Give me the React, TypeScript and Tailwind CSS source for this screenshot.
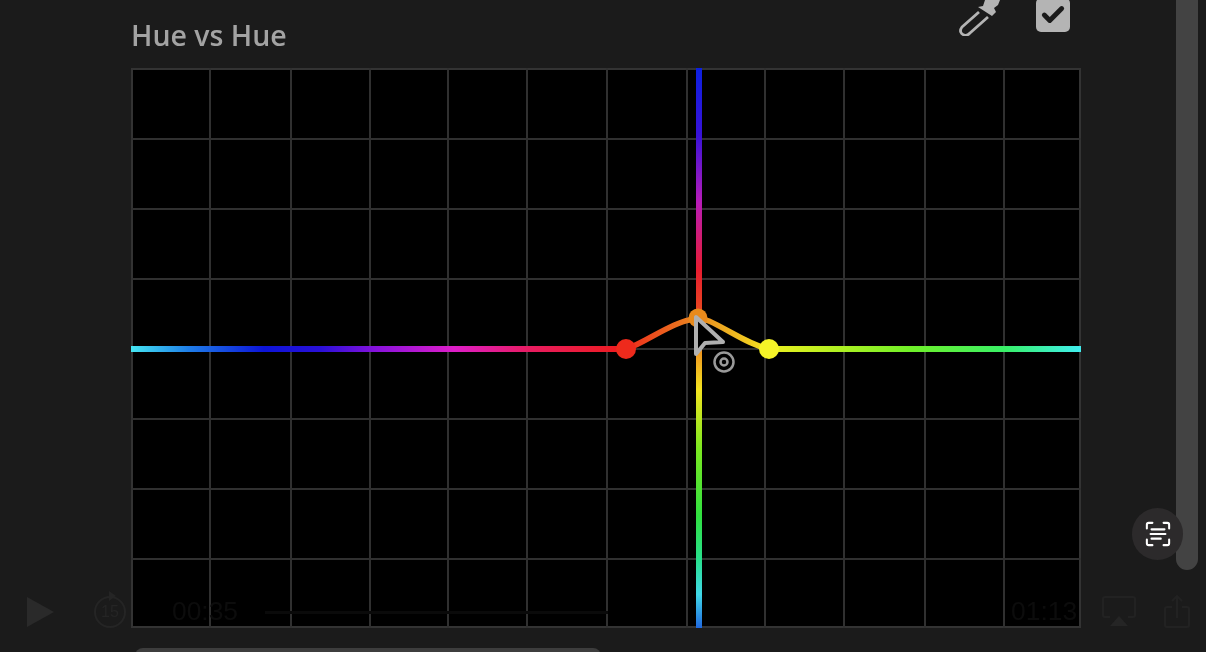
import { Check } from "lucide-react";

const vLines = [79, 160, 239, 317, 396, 476, 556, 634, 713, 794, 873];
const hLines = [71, 141, 211, 281, 351, 421, 491];

const HueChart = () => (
  <svg width="950" height="560" viewBox="0 0 950 560" className="block">
    <defs>
      <linearGradient id="hLine" x1="0" x2="950" y1="0" y2="0" gradientUnits="userSpaceOnUse">
        <stop offset="0" stopColor="#45e6f2" />
        <stop offset="0.06" stopColor="#1f7fe8" />
        <stop offset="0.14" stopColor="#0c14d8" />
        <stop offset="0.2" stopColor="#2a10d8" />
        <stop offset="0.26" stopColor="#8a12dc" />
        <stop offset="0.34" stopColor="#de1ec8" />
        <stop offset="0.42" stopColor="#e81c60" />
        <stop offset="0.52" stopColor="#ee1c1c" />
        <stop offset="0.67" stopColor="#f0f020" />
        <stop offset="0.72" stopColor="#c4f020" />
        <stop offset="0.82" stopColor="#70f028" />
        <stop offset="0.92" stopColor="#38f068" />
        <stop offset="1" stopColor="#40eef0" />
      </linearGradient>
      <linearGradient id="vLine" x1="0" x2="0" y1="0" y2="560" gradientUnits="userSpaceOnUse">
        <stop offset="0" stopColor="#0c20e0" />
        <stop offset="0.12" stopColor="#3812d8" />
        <stop offset="0.24" stopColor="#b81cb8" />
        <stop offset="0.36" stopColor="#e81c30" />
        <stop offset="0.45" stopColor="#e8501c" />
        <stop offset="0.51" stopColor="#f09a20" />
        <stop offset="0.575" stopColor="#f4e420" />
        <stop offset="0.68" stopColor="#7ce820" />
        <stop offset="0.8" stopColor="#30e040" />
        <stop offset="0.88" stopColor="#28e090" />
        <stop offset="0.94" stopColor="#40d8e8" />
        <stop offset="1" stopColor="#1f68e0" />
      </linearGradient>
      <linearGradient id="bump" x1="495" x2="638" y1="0" y2="0" gradientUnits="userSpaceOnUse">
        <stop offset="0" stopColor="#ee2a1c" />
        <stop offset="0.5" stopColor="#ea8a20" />
        <stop offset="1" stopColor="#f4e420" />
      </linearGradient>
    </defs>
    <rect x="1" y="1" width="948" height="558" fill="#000" stroke="#333333" strokeWidth="2" />
    {vLines.map((x) => (
      <line key={x} x1={x} x2={x} y1="0" y2="560" stroke="#303030" strokeWidth="2" />
    ))}
    {hLines.map((y) => (
      <line key={y} x1="0" x2="950" y1={y} y2={y} stroke="#303030" strokeWidth="2" />
    ))}
    {/* hue line, broken where the curve lifts off */}
    <rect x="0" y="278" width="495" height="6" fill="url(#hLine)" />
    <rect x="638" y="278" width="312" height="6" fill="url(#hLine)" />
    <rect x="565" y="0" width="6" height="250" fill="url(#vLine)" />
    <rect x="565" y="282" width="6" height="278" fill="url(#vLine)" />
    <path
      d="M495 281 C 512 276, 538 256, 558 252 Q 568 249, 578 253 C 598 262, 618 277, 638 281"
      fill="none"
      stroke="url(#bump)"
      strokeWidth="5.5"
    />
    <circle cx="567" cy="250" r="9.5" fill="#e88a1c" />
    <circle cx="495" cy="281" r="10" fill="#ee2a1c" />
    <circle cx="638" cy="281" r="10" fill="#f6f428" />
    <path d="M565 249 L565 286 L574 275 L592 274 Z" fill="#000" stroke="#b0b0b0" strokeWidth="4" strokeLinejoin="round" />
    <circle cx="593" cy="294" r="9.5" fill="none" stroke="#9a9a9a" strokeWidth="2.5" />
    <circle cx="593" cy="294" r="3.5" fill="none" stroke="#9a9a9a" strokeWidth="2.5" />
  </svg>
);

const Eyedropper = () => (
  <svg width="44" height="36" viewBox="0 0 44 36" fill="none">
    <path d="M22 12 L5 27 C2 31 4 34 7 35 C9 36 11 35 13 33 L31 17" stroke="#b4b4b4" strokeWidth="2.8" strokeLinejoin="round" />
    <path d="M21 7 L26 6 L28 0 L43 0 L41 5 L37 8 L39 12 L35 16 Z" fill="#b4b4b4" />
  </svg>
);

const PlayerBar = () => (
  <div className="absolute left-0 right-0 top-[590px] h-[44px] flex items-center font-['Liberation_Sans',sans-serif] text-[26.4px] text-[#0c0c0c]">
    <svg width="30" height="32" viewBox="0 0 30 32" className="ml-[26px]">
      <path d="M1 1 L28 16 L1 31 Z" fill="#2a2a2a" />
    </svg>
    <div className="relative ml-[38px] w-[32px] h-[32px] rounded-full border-2 border-[#252525] flex items-center justify-center text-[16px] text-[#252525]">
      15
      <svg width="12" height="12" viewBox="0 0 12 12" className="absolute -top-[8px] left-[11px]">
        <path d="M2 1 L9 6 L2 11 Z" fill="#252525" />
      </svg>
    </div>
    <span className="ml-[46px]">00:35</span>
    <div className="ml-[27px] w-[343px] h-[3px] bg-[#0a0a0a]" />
    <span className="ml-[403px]">01:13</span>
    <svg width="34" height="32" viewBox="0 0 34 32" fill="none" className="ml-[25px]">
      <path d="M8 21 H3 Q1 21 1 19 V3 Q1 1 3 1 H31 Q33 1 33 3 V19 Q33 21 31 21 H26" stroke="#222222" strokeWidth="2" />
      <path d="M17 20 L26 30 H8 Z" fill="#252525" />
    </svg>
    <svg width="26" height="34" viewBox="0 0 26 34" fill="none" className="ml-[28px]">
      <path d="M8 12 H3 Q1 12 1 14 V30 Q1 32 3 32 H23 Q25 32 25 30 V14 Q25 12 23 12 H18 M13 23 V2 M8 6 L13 1 L18 6" stroke="#222222" strokeWidth="2" />
    </svg>
  </div>
);

const App = () => {
  return (
    <div className="w-[1206px] h-[652px] overflow-hidden bg-[#1b1b1b]">
      <div className="relative w-[1206px] h-[652px] blur-[0.5px] font-['Open_Sans',sans-serif]">
        <div className="pl-[131px]">
          <div className="flex h-[68px] w-[950px] items-start">
            <h2 className="mt-[15px] text-[28.5px] font-semibold leading-[40px] text-[#a3a3a3]">Hue vs Hue</h2>
            <div className="ml-auto flex items-start">
              <Eyedropper />
              <div className="ml-[35px] mr-[11px] -mt-[2px] flex h-[34px] w-[34px] items-center justify-center rounded-[5px] bg-[#b4b4b4]">
                <Check size={26} strokeWidth={4.5} color="#1b1b1b" />
              </div>
            </div>
          </div>
          <HueChart />
        </div>
        <PlayerBar />
        {/* scrollbar thumb */}
        <div className="absolute right-[8px] top-[-20px] h-[590px] w-[22px] rounded-b-full bg-[#434343]" />
        {/* live text button */}
        <div className="absolute left-[1132px] top-[508px] flex h-[52px] w-[51px] items-center justify-center rounded-full bg-[#2c2a2b]">
          <svg width="26" height="26" viewBox="0 0 28 28" fill="none" stroke="#fff" strokeWidth="2.2" strokeLinecap="round">
            <path d="M2 8 V4 Q2 2 4 2 H8 M20 2 H24 Q26 2 26 4 V8 M26 20 V24 Q26 26 24 26 H20 M8 26 H4 Q2 26 2 24 V20" />
            <path d="M7 9 H21 M6 14 H22 M7 19 H17" />
          </svg>
        </div>
        {/* edge of the panel below */}
        <div className="absolute left-[135px] top-[648px] h-[8px] w-[466px] rounded-t-[8px] bg-[#3d3d3d]" />
      </div>
    </div>
  );
};

export default App;
